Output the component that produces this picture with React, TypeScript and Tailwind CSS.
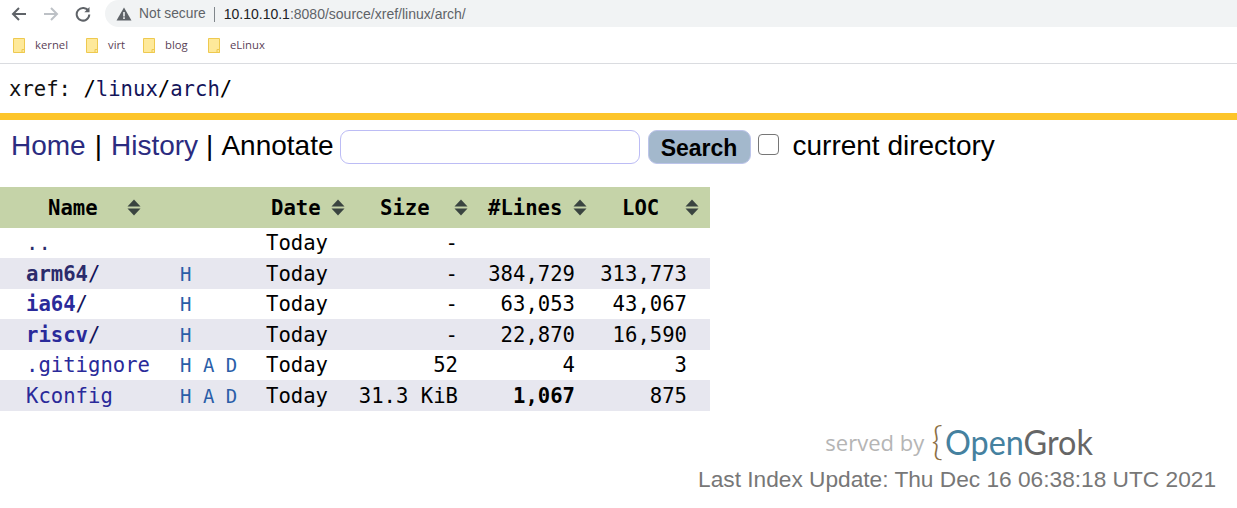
import React from "react";

const mono = "font-['DejaVu_Sans_Mono',monospace]";
const sans = "font-['Liberation_Sans',Arial,sans-serif]";

function Folder() {
  return (
    <svg width="12" height="15" viewBox="0 0 12 15" className="shrink-0">
      <path d="M0.5 0.5H11.5V14.5H0.5Z" fill="#fee99a" stroke="#eec94f" />
      <path d="M9 11.5H11.5V14.5H9Z" fill="#fee99a" stroke="#eec94f" />
    </svg>
  );
}

function Sort() {
  return (
    <svg width="14" height="17" viewBox="0 0 14 17" className="shrink-0">
      <path d="M7 0.5L13.5 7.5H0.5Z" fill="#3a4440" />
      <path d="M7 16.5L13.5 9.5H0.5Z" fill="#3a4440" />
    </svg>
  );
}

const Bookmark = ({ label, w }: { label: string; w: string }) => (
  <div className={`flex items-center gap-[10px] ${w}`}>
    <Folder />
    <span className="font-['Open_Sans',sans-serif] text-[11.3px] text-[#5b3f57]">{label}</span>
  </div>
);

const rows = [
  { name: "..", dir: false, visited: true, links: "", size: "-", lines: "", loc: "", alt: false, boldLines: false },
  { name: "arm64", dir: true, visited: true, links: "H", size: "-", lines: "384,729", loc: "313,773", alt: true, boldLines: false },
  { name: "ia64", dir: true, visited: false, links: "H", size: "-", lines: "63,053", loc: "43,067", alt: false, boldLines: false },
  { name: "riscv", dir: true, visited: false, links: "H", size: "-", lines: "22,870", loc: "16,590", alt: true, boldLines: false },
  { name: ".gitignore", dir: false, visited: false, links: "H A D", size: "52", lines: "4", loc: "3", alt: false, boldLines: false },
  { name: "Kconfig", dir: false, visited: false, links: "H A D", size: "31.3 KiB", lines: "1,067", loc: "875", alt: true, boldLines: true },
];

export default function App() {
  return (
    <div className="h-[508px] w-[1237px] overflow-hidden bg-white">
      {/* Browser toolbar */}
      <div className="flex h-[27px] items-center bg-white">
        <div className="flex w-[105px] items-center pl-[11px] gap-[16px]">
          <svg width="16" height="16" viewBox="0 0 16 16" fill="none" stroke="#5f6368" strokeWidth="2">
            <path d="M15 8H2M8 2L2 8L8 14" />
          </svg>
          <svg width="16" height="16" viewBox="0 0 16 16" fill="none" stroke="#bdc1c6" strokeWidth="2">
            <path d="M1 8H14M8 2L14 8L8 14" />
          </svg>
          <svg width="16" height="16" viewBox="0 0 16 16" fill="none" stroke="#5f6368" strokeWidth="2">
            <path d="M13.5 5.2A6.3 6.3 0 1 0 14.3 8.5" />
            <path d="M14.5 1V6.2H9.3Z" fill="#5f6368" stroke="none" />
          </svg>
        </div>
        <div className="flex h-full flex-1 items-center rounded-l-[14px] bg-[#f1f3f4] pl-[11px] pt-[1px]">
          <svg width="16" height="14" viewBox="0 0 16 14" className="shrink-0">
            <path d="M8 0.5L15.5 13.5H0.5Z" fill="#5f6368" />
            <path d="M7.2 5H8.8V9.5H7.2ZM7.2 10.3H8.8V12H7.2Z" fill="#f1f3f4" />
          </svg>
          <span className={`${sans} ml-[7px] text-[13.8px] text-[#5f6368]`}>Not secure</span>
          <span className="ml-[8px] mr-[9px] h-[15px] w-px bg-[#80868b]" />
          <span className={`${sans} text-[14px] text-[#5f6368]`}>
            <span className="text-[#202124]">10.10.10.1</span>:8080/source/xref/linux/arch/
          </span>
        </div>
      </div>

      {/* Bookmarks */}
      <div className="flex h-[37px] items-center border-b border-[#dadce0] pl-[13px] pt-[1px]">
        <Bookmark label="kernel" w="w-[73px]" />
        <Bookmark label="virt" w="w-[57px]" />
        <Bookmark label="blog" w="w-[65px]" />
        <Bookmark label="eLinux" w="w-[70px]" />
      </div>

      {/* xref path */}
      <div className={`${mono} flex h-[49px] items-center pl-[9px] pt-[2px] text-[20.6px] text-[#000]`}>
        <span className="text-[#111]">xref: </span>
        <span className="whitespace-pre text-[#14145a]">
          <span className="text-[#000]"> /</span>linux<span className="text-[#000]">/</span>arch<span className="text-[#000]">/</span>
        </span>
      </div>

      <div className="h-[7px] bg-[#fdc52a]" />

      {/* Navigation */}
      <div className={`${sans} flex h-[51px] items-center pl-[11px] text-[28px] text-black`}>
        <span className="text-[#2b2b7f]">Home</span>
        <span className="mx-[9px]">|</span>
        <span className="text-[#2b2b7f]">History</span>
        <span className="mx-[8px]">|</span>
        <span>Annotate</span>
        <input className="ml-[6px] mt-[2px] h-[34px] w-[300px] rounded-[9px] border border-[#bcbcf5] bg-white" />
        <button className="ml-[8px] mt-[2px] h-[34px] w-[103px] rounded-[9px] border border-[#bcc4ea] bg-[#a3b8cc] text-[23px] font-bold text-black">
          Search
        </button>
        <span className="ml-[7px] mb-[3px] h-[21px] w-[21px] rounded-[4px] border border-[#767676] bg-white" />
        <span className="ml-[14px]">current directory</span>
      </div>

      {/* Table */}
      <table className={`${mono} mt-[16px] w-[710px] table-fixed border-collapse text-[20.6px] leading-[30px] text-black`}>
        <colgroup>
          <col className="w-[166px]" />
          <col className="w-[100px]" />
          <col className="w-[79px]" />
          <col className="w-[125px]" />
          <col className="w-[118px]" />
          <col className="w-[122px]" />
        </colgroup>
        <thead>
          <tr className="h-[41px] bg-[#c5d3a8]">
            <th className="p-0 font-bold">
              <div className="flex items-center pl-[48px] pr-[25px]">
                <span className="flex-1 text-left">Name</span>
                <Sort />
              </div>
            </th>
            <th className="p-0" />
            <th className="p-0 font-bold">
              <div className="flex items-center pl-[5px]">
                <span className="mr-[10px]">Date</span>
                <Sort />
              </div>
            </th>
            <th className="p-0 font-bold">
              <div className="flex items-center pl-[35px] pr-[2px]">
                <span className="flex-1 text-left">Size</span>
                <Sort />
              </div>
            </th>
            <th className="p-0 font-bold">
              <div className="flex items-center pl-[18px] pr-[1px]">
                <span className="flex-1 text-left">#Lines</span>
                <Sort />
              </div>
            </th>
            <th className="p-0 font-bold">
              <div className="flex items-center pl-[34px] pr-[11px]">
                <span className="flex-1 text-left">LOC</span>
                <Sort />
              </div>
            </th>
          </tr>
        </thead>
        <tbody>
          {rows.map((r) => (
            <tr key={r.name} className={r.alt ? "h-[31px] bg-[#e7e7ef]" : "h-[30px] bg-white"}>
              <td className={`p-0 pl-[26px] ${r.visited ? "text-[#2b2b6b]" : "text-[#2a2a9a]"}`}>
                {r.dir ? (
                  <>
                    <span className="font-bold">{r.name}</span>
                    <span className="text-[#14145a]">/</span>
                  </>
                ) : (
                  <span>{r.name}</span>
                )}
              </td>
              <td className="p-0 pl-[14px] text-[19px] whitespace-pre text-[#2a5ea8]">{r.links}</td>
              <td className="p-0">Today</td>
              <td className="p-0 pr-[12px] text-right">{r.size}</td>
              <td className={`p-0 pr-[13px] text-right ${r.boldLines ? "font-bold" : ""}`}>{r.lines}</td>
              <td className="p-0 pr-[23px] text-right">{r.loc}</td>
            </tr>
          ))}
        </tbody>
      </table>

      {/* Footer */}
      <div className="mt-[8px] flex flex-col items-end pr-[21px]">
        <div className="flex items-baseline pr-[124px]">
          <span className="-translate-y-[1px] font-['Open_Sans',sans-serif] text-[22px] text-[#b5b5b5]">served by</span>
          <span className="ml-[7px] translate-y-[3px] font-['Lato',sans-serif] text-[40px] leading-[37px] font-light text-[#8c6f45]">{"{"}</span>
          <span className="ml-[2px] w-[147px] origin-left translate-y-[3px] scale-x-[0.925] font-['Lato',sans-serif] text-[35px] leading-[37px] whitespace-pre">
            <span className="text-[#45819f]">Open</span>
            <span className="text-[#666666]">Grok</span>
          </span>
        </div>
        <div className={`${sans} mt-[6px] text-[22.7px] leading-[26px] text-[#777777]`}>
          Last Index Update: Thu Dec 16 06:38:18 UTC 2021
        </div>
      </div>
    </div>
  );
}
